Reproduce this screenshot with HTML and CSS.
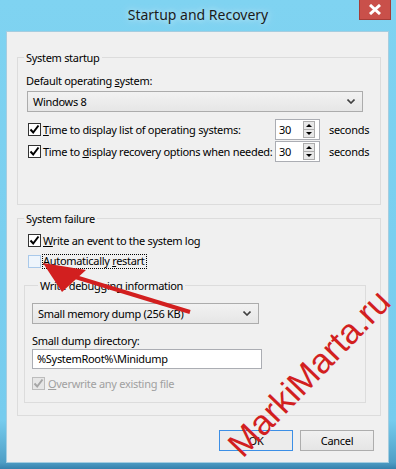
FILE: index.html
```html
<!DOCTYPE html>
<html>
<head>
<meta charset="utf-8">
<link rel="stylesheet" href="styles.css">
</head>
<body>
<div class="window">
  <div class="titlebar">
    <span class="title">Startup and Recovery</span>
    <div class="close"><svg width="14" height="11" viewBox="0 0 14 11"><path d="M2 1 L12 10 M12 1 L2 10" stroke="#fff" stroke-width="3"/></svg></div>
  </div>
  <div class="client">
    <div class="group g1">
      <div class="legend">System startup</div>
      <div class="label lbl-os">Default operating <u>s</u>ystem:</div>
      <div class="combo combo-os"><span>Windows 8</span><svg class="chev" width="8" height="5" viewBox="0 0 8 5"><path d="M0.5 0.5 L4 4 L7.5 0.5" stroke="#404040" stroke-width="1.6" fill="none"/></svg></div>
      <div class="opt-row first">
        <span class="cb checked"><svg width="11" height="11" viewBox="0 0 11 11"><path d="M1.5 5.5 L4.2 8.5 L9.5 1.5" stroke="#000" stroke-width="2" fill="none"/></svg></span>
        <span class="opt-text"><u>T</u>ime to display list of operating systems:</span>
        <div class="spin"><span>30</span><div class="spin-btns"><span class="sb"><i class="up"></i></span><span class="sb"><i class="down"></i></span></div></div>
        <span class="secs">seconds</span>
      </div>
      <div class="opt-row">
        <span class="cb checked"><svg width="11" height="11" viewBox="0 0 11 11"><path d="M1.5 5.5 L4.2 8.5 L9.5 1.5" stroke="#000" stroke-width="2" fill="none"/></svg></span>
        <span class="opt-text">Time to <u>d</u>isplay recovery options when needed:</span>
        <div class="spin"><span>30</span><div class="spin-btns"><span class="sb"><i class="up"></i></span><span class="sb"><i class="down"></i></span></div></div>
        <span class="secs">seconds</span>
      </div>
    </div>

    <div class="group g2">
      <div class="legend">System failure</div>
      <div class="chk-row r-log">
        <span class="cb checked"><svg width="11" height="11" viewBox="0 0 11 11"><path d="M1.5 5.5 L4.2 8.5 L9.5 1.5" stroke="#000" stroke-width="2" fill="none"/></svg></span>
        <span class="opt-text"><u>W</u>rite an event to the system log</span>
      </div>
      <div class="chk-row r-restart">
        <span class="cb hover"></span>
        <span class="focus">Automatically <u>r</u>estart</span>
      </div>
      <div class="group g3">
        <div class="legend">Write debugging information</div>
        <div class="combo combo-dump"><span>Small memory dump (256 KB)</span><svg class="chev" width="8" height="5" viewBox="0 0 8 5"><path d="M0.5 0.5 L4 4 L7.5 0.5" stroke="#404040" stroke-width="1.6" fill="none"/></svg></div>
        <div class="label lbl-dir">Small dump directory:</div>
        <div class="textbox">%SystemRoot%\Minidump</div>
        <div class="chk-row disabled r-over">
          <span class="cb dis"><svg width="11" height="11" viewBox="0 0 11 11"><path d="M1.5 5.5 L4.2 8.5 L9.5 1.5" stroke="#a6a6a6" stroke-width="2" fill="none"/></svg></span>
          <span class="opt-text"><u>O</u>verwrite any existing file</span>
        </div>
      </div>
    </div>

    <div class="buttons">
      <div class="btn default">OK</div>
      <div class="btn">Cancel</div>
    </div>
  </div>
</div>

<svg class="arrow" width="396" height="469" viewBox="0 0 396 469">
  <line x1="190" y1="312" x2="72" y2="276" stroke="#d21f1f" stroke-width="4"/>
  <polygon points="43,263 86,270 62,292" fill="#d21f1f"/>
</svg>
<div class="watermark">MarkiMarta.ru</div>
</body>
</html>
```

FILE: styles.css
```css
* { box-sizing: border-box; }
html, body { margin: 0; padding: 0; }
body {
  width: 396px;
  height: 469px;
  overflow: hidden;
  position: relative;
  font-family: "Noto Sans", "Liberation Sans", sans-serif;
  font-size: 11px;
  letter-spacing: -0.3px;
  line-height: 15px;
  color: #000;
  background: #7bcfee;
}
u { text-decoration: underline; text-underline-offset: 1px; }

.window {
  width: 396px;
  height: 469px;
  display: flex;
  flex-direction: column;
  background: linear-gradient(to bottom, #7fd3f1 0, #76ccee 420px, #4f9fc6 462px, #3681ad 469px);
}

.titlebar {
  height: 31px;
  position: relative;
  display: flex;
  justify-content: center;
  align-items: center;
}
.title {
  font-size: 14px;
  letter-spacing: 0;
  line-height: 18px;
  color: #1b1b1b;
  margin-top: -1px;
  text-shadow: 0 0 6px rgba(255,255,255,0.6), 0 0 12px rgba(255,255,255,0.4);
}
.close {
  position: absolute;
  top: 0;
  right: 5px;
  width: 32px;
  height: 20px;
  background: #c9504a;
  border: 1px solid #a53c37;
  border-top: none;
  display: flex;
  align-items: center;
  justify-content: center;
}

.client {
  margin-left: 6px;
  width: 383px;
  height: 432px;
  background: #f0f0f0;
  border: 1px solid #a5cde0;
  padding: 25px 7px 0 10px;
}

.group {
  border: 1px solid #dcdcdc;
  padding-left: 8px;
}
.legend {
  display: block;
  width: max-content;
  margin-top: -8px;
  margin-left: -2px;
  padding: 0 2px;
  line-height: 15px;
  background: #f0f0f0;
}

.g1 { height: 148px; }
.label { line-height: 15px; }
.lbl-os { margin-top: 8px; }
.combo {
  height: 21px;
  border: 1px solid #acacac;
  background: linear-gradient(to bottom, #f2f2f2, #e6e6e6);
  display: flex;
  align-items: center;
  padding-left: 5px;
  padding-right: 7px;
}
.combo span { flex: 1; }
.combo-os { margin-top: 3px; margin-left: 1px; width: 336px; }

.opt-row {
  display: flex;
  align-items: center;
  height: 21px;
  margin-left: 2px;
}
.opt-row.first { margin-top: 7px; }
.opt-row + .opt-row { margin-top: 1px; }

.cb {
  width: 13px;
  height: 13px;
  border: 1px solid #333;
  background: #fff;
  margin-right: 2px;
  display: flex;
  align-items: center;
  justify-content: center;
  flex: none;
}
.cb.hover { border-color: #a9c9ea; background: #eef5fc; }
.cb.dis { border-color: #bcbcbc; background: #e6e6e6; }
.opt-row .opt-text { width: 232px; white-space: nowrap; }

.spin {
  width: 45px;
  height: 21px;
  border: 1px solid #abadb3;
  background: #fff;
  display: flex;
  align-items: center;
  padding-left: 3px;
  padding-right: 4px;
}
.spin > span { flex: 1; }
.spin-btns {
  width: 12px;
  height: 17px;
  display: flex;
  flex-direction: column;
}
.sb {
  flex: 1;
  border: 1px solid #acacac;
  background: #e8e8e8;
  display: flex;
  align-items: center;
  justify-content: center;
}
.sb + .sb { border-top: none; }
.up { width: 0; height: 0; border-left: 3px solid transparent; border-right: 3px solid transparent; border-bottom: 3px solid #000; }
.down { width: 0; height: 0; border-left: 3px solid transparent; border-right: 3px solid transparent; border-top: 3px solid #000; }
.secs { margin-left: 9px; }

.g2 { height: 198px; margin-top: 13px; }
.chk-row {
  display: flex;
  align-items: center;
  height: 17px;
  margin-left: 2px;
}
.r-log { margin-top: 6px; }
.r-restart { margin-top: 4px; }
.focus {
  border: 1px dotted #000;
  line-height: 12px;
  padding: 0 1px 1px 0;
  margin-left: -1px;
}

.g3 {
  margin-top: 15px;
  margin-left: -2px;
  margin-right: 14px;
  height: 118px;
  padding-left: 7px;
}
.g3 .legend { margin-left: 6px; }
.combo-dump { margin-top: 10px; width: 227px; }
.lbl-dir { margin-top: 9px; }
.textbox {
  margin-top: 1px;
  width: 230px;
  height: 20px;
  border: 1px solid #abadb3;
  background: #fff;
  line-height: 18px;
  padding-left: 4px;
}
.r-over { margin-top: 6px; margin-left: 0; }
.r-over .cb { margin-right: 3px; }
.disabled { color: #a0a0a0; }

.buttons {
  display: flex;
  justify-content: flex-end;
  gap: 7px;
  margin-top: 14px;
  margin-right: 7px;
}
.btn {
  width: 74px;
  height: 21px;
  border: 1px solid #adadad;
  background: linear-gradient(to bottom, #f0f0f0, #e5e5e5);
  display: flex;
  align-items: center;
  justify-content: center;
}
.btn.default { border-color: #3c8fe6; background: #ececec; }

.arrow {
  position: absolute;
  left: 0;
  top: 0;
  pointer-events: none;
}
.watermark {
  position: absolute;
  left: 309px;
  top: 373px;
  transform: translate(-50%, -50%) rotate(-46deg);
  font-family: "Liberation Sans", Arial, sans-serif;
  font-size: 35px;
  line-height: 26px;
  letter-spacing: 0;
  color: #d21f1f;
  white-space: nowrap;
  pointer-events: none;
}
```
